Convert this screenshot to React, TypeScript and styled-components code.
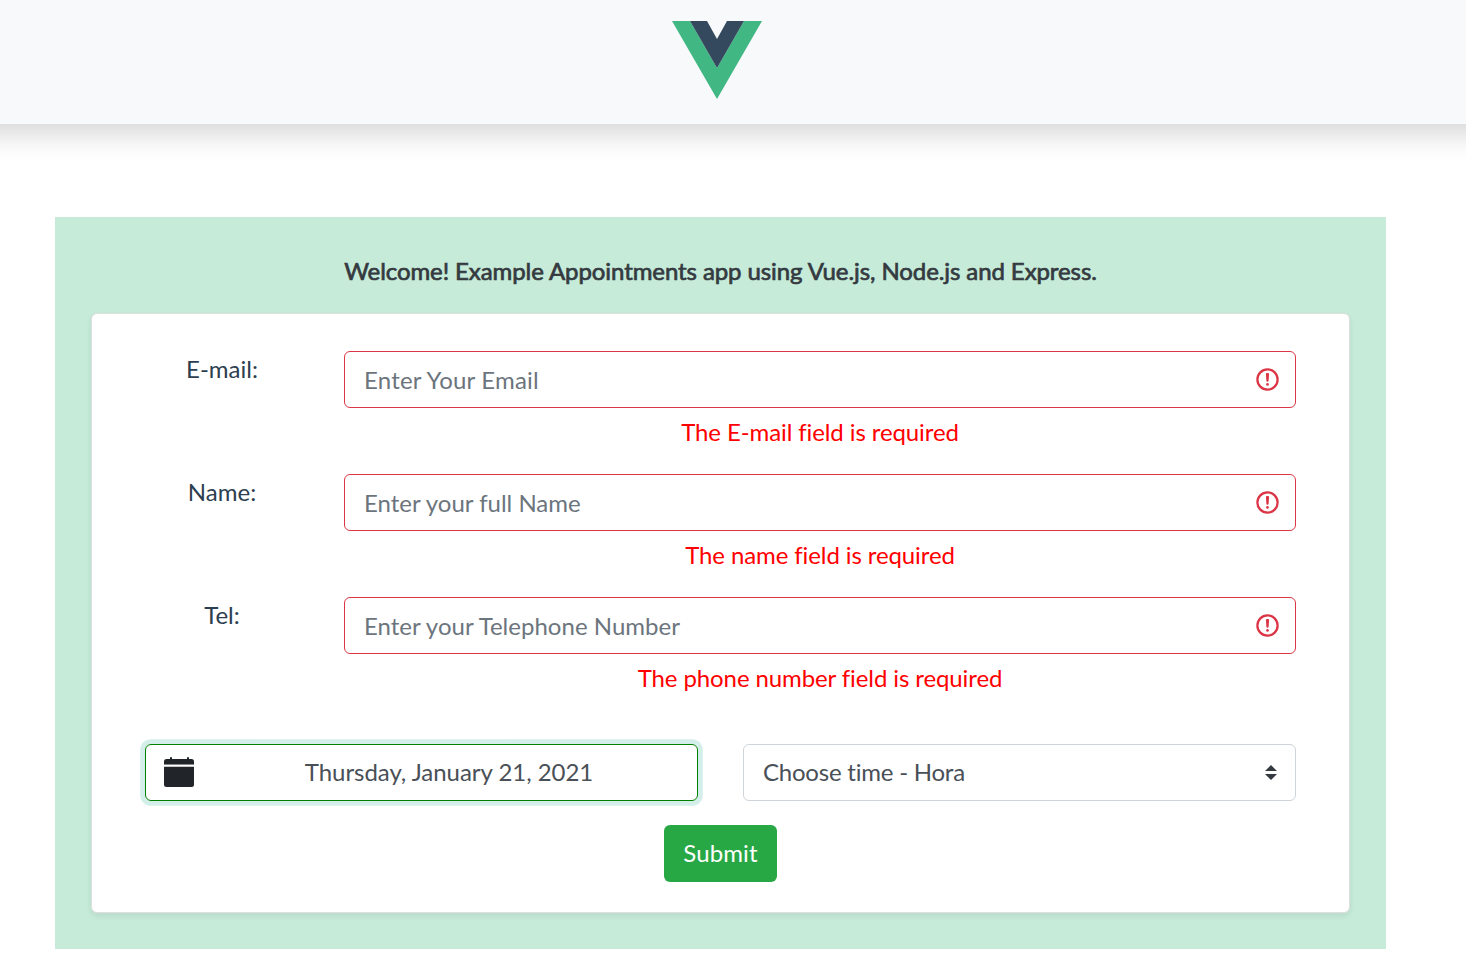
import React from 'react';
import styled, { createGlobalStyle } from 'styled-components';

const GlobalStyle = createGlobalStyle`
  *, *::before, *::after { box-sizing: border-box; }
  body {
    margin: 0;
    background: #fff;
    font-family: Lato, sans-serif;
    font-size: 24px;
    line-height: 36px;
    color: #2c3e50;
    overflow: hidden;
  }
`;

const Header = styled.header`
  height: 124px;
  margin: 0 -40px;
  padding: 21px 0 0 712px;
  background: #f8f9fb;
  box-shadow: 0 12px 24px rgba(0, 0, 0, 0.15);
`;

const Logo = styled.svg`
  display: block;
  width: 90px;
  height: 78px;
`;

const Panel = styled.main`
  width: 1331px;
  height: 732px;
  margin: 93px 0 0 55px;
  padding: 36px 36px 0;
  background: #c6ebd9;
`;

const Title = styled.h1`
  margin: 0 0 24px;
  font-size: 24px;
  line-height: 36px;
  font-weight: 400;
  letter-spacing: -0.09px;
  color: #343a40;
  text-align: center;
  white-space: nowrap;
  -webkit-text-stroke: 0.7px #343a40;
`;

const Card = styled.form`
  height: 600px;
  padding: 37px 53px 0;
  background: #fff;
  border: 1px solid #dfdfdf;
  border-radius: 6px;
  box-shadow: 0 3px 6px rgba(0, 0, 0, 0.075);
`;

const Row = styled.div`
  display: grid;
  grid-template-columns: 154px 952px;
  column-gap: 45px;
  height: 123px;
`;

const Label = styled.label`
  text-align: center;
`;

const InputBox = styled.div`
  display: flex;
  align-items: center;
  height: 57px;
  padding: 0 14px 0 19px;
  border: 1px solid #dc3545;
  border-radius: 6px;
`;

const Input = styled.input<{ $tracking: number }>`
  flex: 1;
  padding: 0;
  border: 0;
  outline: 0;
  background: none;
  font: inherit;
  letter-spacing: ${p => p.$tracking}px;
  &::placeholder { color: #6c757d; opacity: 1; }
`;

const WarningIcon = styled.svg`
  width: 27px;
  height: 27px;
`;

const ErrorText = styled.div`
  margin-top: 6px;
  text-align: center;
  letter-spacing: -0.1px;
  color: #ff0000;
`;

const Pickers = styled.div`
  display: grid;
  grid-template-columns: 553px 553px;
  column-gap: 45px;
  margin-top: 24px;
`;

const Picker = styled.div<{ $focused?: boolean }>`
  display: flex;
  align-items: center;
  height: 57px;
  padding: 0 18px 1px;
  border: 1px solid ${p => (p.$focused ? '#008000' : '#ced4da')};
  border-radius: 6px;
  box-shadow: ${p => (p.$focused ? '0 0 0 4.8px #d4efea' : 'none')};
  color: #495057;
`;

const CalendarIcon = styled.svg`
  width: 30px;
  height: 30px;
  color: #212529;
`;

const DateText = styled.span`
  flex: 1;
  padding-left: 25px;
  text-align: center;
  letter-spacing: -0.03px;
`;

const TimeText = styled.span`
  flex: 1;
  padding-left: 1px;
  letter-spacing: -0.22px;
`;

const Arrows = styled.svg`
  width: 12px;
  height: 15px;
`;

const Submit = styled.button`
  display: block;
  width: 113px;
  height: 57px;
  margin: 24px auto 0;
  padding: 0 0 2px;
  border: 0;
  border-radius: 6px;
  background: #28a745;
  color: #fff;
  font: inherit;
  letter-spacing: 0.1px;
`;

const fields = [
  { id: 'email', label: 'E-mail:', hint: 'Enter Your Email', tracking: 0.2, error: 'The E-mail field is required' },
  { id: 'name', label: 'Name:', hint: 'Enter your full Name', tracking: 0, error: 'The name field is required' },
  { id: 'tel', label: 'Tel:', hint: 'Enter your Telephone Number', tracking: 0.02, error: 'The phone number field is required' },
];

function Warning() {
  return (
    <WarningIcon viewBox="0 0 12 12" fill="none" stroke="#dc3545">
      <circle cx="6" cy="6" r="4.5" />
      <path strokeLinejoin="round" d="M5.8 3.6h.4L6 6.5z" />
      <circle cx="6" cy="8.2" r=".6" fill="#dc3545" stroke="none" />
    </WarningIcon>
  );
}

export default function App() {
  return (
    <>
      <GlobalStyle />
      <Header>
        <Logo viewBox="0 0 90 78" preserveAspectRatio="none">
          <path fill="#41b883" d="M0 0h18L45 47 72 0h18L45 78z" />
          <path fill="#34495e" d="M18 0h17l10 18L55 0h17L45 47z" />
        </Logo>
      </Header>
      <Panel>
        <Title>Welcome! Example Appointments app using Vue.js, Node.js and Express.</Title>
        <Card>
          {fields.map(f => (
            <Row key={f.id}>
              <Label htmlFor={f.id}>{f.label}</Label>
              <div>
                <InputBox>
                  <Input id={f.id} placeholder={f.hint} $tracking={f.tracking} />
                  <Warning />
                </InputBox>
                <ErrorText>{f.error}</ErrorText>
              </div>
            </Row>
          ))}
          <Pickers>
            <Picker $focused>
              <CalendarIcon viewBox="0 0 30 30" fill="currentColor">
                <path d="M0 9.7h30v17.8a2.5 2.5 0 0 1-2.5 2.5h-25A2.5 2.5 0 0 1 0 27.500z" />
                <path d="M0 7V4.500A2.500 2.500 0 0 1 2.500 2H6V1a1 1 0 0 1 2 0v1h15V1a1 1 0 0 1 2 0v1h2.500A2.500 2.500 0 0 1 30 4.500V7z" />
                <path fill="#85878a" d="M0 7h30v1H0z" />
              </CalendarIcon>
              <DateText>Thursday, January 21, 2021</DateText>
            </Picker>
            <Picker>
              <TimeText>Choose time - Hora</TimeText>
              <Arrows viewBox="0 0 4 5"><path fill="#343a40" d="M2 0 0 2h4zm0 5L0 3h4z" /></Arrows>
            </Picker>
          </Pickers>
          <Submit type="button">Submit</Submit>
        </Card>
      </Panel>
    </>
  );
}
